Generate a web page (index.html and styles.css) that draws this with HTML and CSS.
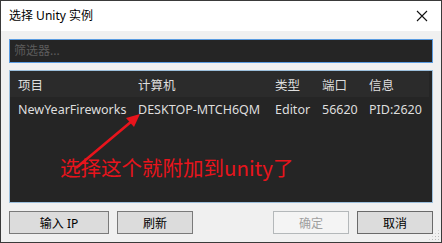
FILE: index.html
```html
<!DOCTYPE html>
<html lang="zh-CN">
<head>
  <meta charset="UTF-8">
  <title>选择 Unity 实例</title>
  <link rel="stylesheet" href="styles.css">
</head>
<body>
  <div class="window">
    <!-- Title bar -->
    <div class="titlebar">
      <span class="title">选择 Unity 实例</span>
      <svg class="close" width="12" height="12" viewBox="0 0 12 12">
        <path d="M1 1 L11 11 M11 1 L1 11" stroke="#111" stroke-width="1.1" fill="none"/>
      </svg>
    </div>

    <div class="content">
      <div class="filter">筛选器...</div>

      <div class="list">
        <div class="row head">
          <span>项目</span>
          <span>计算机</span>
          <span>类型</span>
          <span>端口</span>
          <span>信息</span>
        </div>
        <div class="row item">
          <span>NewYearFireworks</span>
          <span>DESKTOP-MTCH6QM</span>
          <span>Editor</span>
          <span>56620</span>
          <span>PID:2620</span>
        </div>

        <!-- annotation drawn on top of the list -->
        <svg class="arrow" width="80" height="60" viewBox="0 0 80 60">
          <path d="M4 57 L60 10" stroke="#e8141c" stroke-width="2.6" fill="none"/>
          <path d="M68 3 L54 7 L62 16 Z" fill="#e8141c"/>
        </svg>
        <div class="note">选择这个就附加到unity了</div>
      </div>

      <div class="buttons">
        <button class="btn wide">输入 IP</button>
        <button class="btn">刷新</button>
        <button class="btn disabled push">确定</button>
        <button class="btn default">取消</button>
      </div>
    </div>

    <div class="grip"></div>
  </div>
</body>
</html>
```

FILE: styles.css
```css
body {
  margin: 0;
  font-family: "Noto Sans", "Noto Sans CJK SC", sans-serif;
  font-size: 12px;
}
.window {
  position: relative;
  width: 442px;
  height: 243px;
  box-sizing: border-box;
  border: 1px solid #3a3a3a;
  display: flex;
  flex-direction: column;
  background: #f0f0f0;
}
.titlebar {
  height: 30px;
  background: #ffffff;
  display: flex;
  align-items: center;
  padding: 0 8px;
  flex-shrink: 0;
}
.title {
  font-family: "Noto Sans", "Noto Sans CJK SC", sans-serif;
  font-size: 12px;
  line-height: 16px;
  color: #000;
  flex: 1;
}
.close {
  margin-right: 5px;
}
.content {
  flex: 1;
  display: flex;
  flex-direction: column;
  padding: 8px 8px 8px 8px;
}
.filter {
  height: 24px;
  box-sizing: border-box;
  border: 1px solid #5a9be0;
  background: #252525;
  color: #5c5c5c;
  line-height: 22px;
  padding-left: 4px;
  font-size: 12px;
}
.list {
  position: relative;
  margin-top: 7px;
  height: 133px;
  box-sizing: border-box;
  border: 1px solid #9cbfdc;
  background: #252525;
  color: #dedede;
}
.row {
  display: grid;
  grid-template-columns: 120px 137px 47px 47px 1fr;
  padding-left: 8px;
  align-items: center;
  white-space: nowrap;
  font-size: 12.5px;
}
.head {
  height: 26px;
  background: #2b2b2b;
  margin-right: 3px;
}
.item {
  height: 25px;
}
.arrow {
  position: absolute;
  left: 62px;
  top: 40px;
}
.note {
  position: absolute;
  left: 50px;
  top: 83px;
  font-family: "Noto Sans CJK SC", sans-serif;
  font-size: 20.5px;
  line-height: 26px;
  color: #e8141c;
  white-space: nowrap;
}
.buttons {
  display: flex;
  gap: 8px;
  margin-top: 8px;
}
.btn {
  height: 23px;
  width: 76px;
  padding: 0;
  border: 1px solid #7a7a7a;
  background: #dcdcdc;
  color: #000;
  font-family: "Noto Sans", "Noto Sans CJK SC", sans-serif;
  font-size: 12px;
}
.btn.wide {
  width: 100px;
}
.btn.push {
  margin-left: auto;
}
.btn.disabled {
  border-color: #b4b8ba;
  background: #f4f4f4;
  color: #a0a0a0;
}
.btn.default {
  border-color: #6a6a6a;
}
.grip {
  position: absolute;
  right: 1px;
  bottom: 1px;
  width: 12px;
  height: 12px;
  background-image: radial-gradient(circle, #b8b8b8 0.9px, transparent 1px);
  background-size: 3px 3px;
  clip-path: polygon(100% 0, 100% 100%, 0 100%);
}
```
